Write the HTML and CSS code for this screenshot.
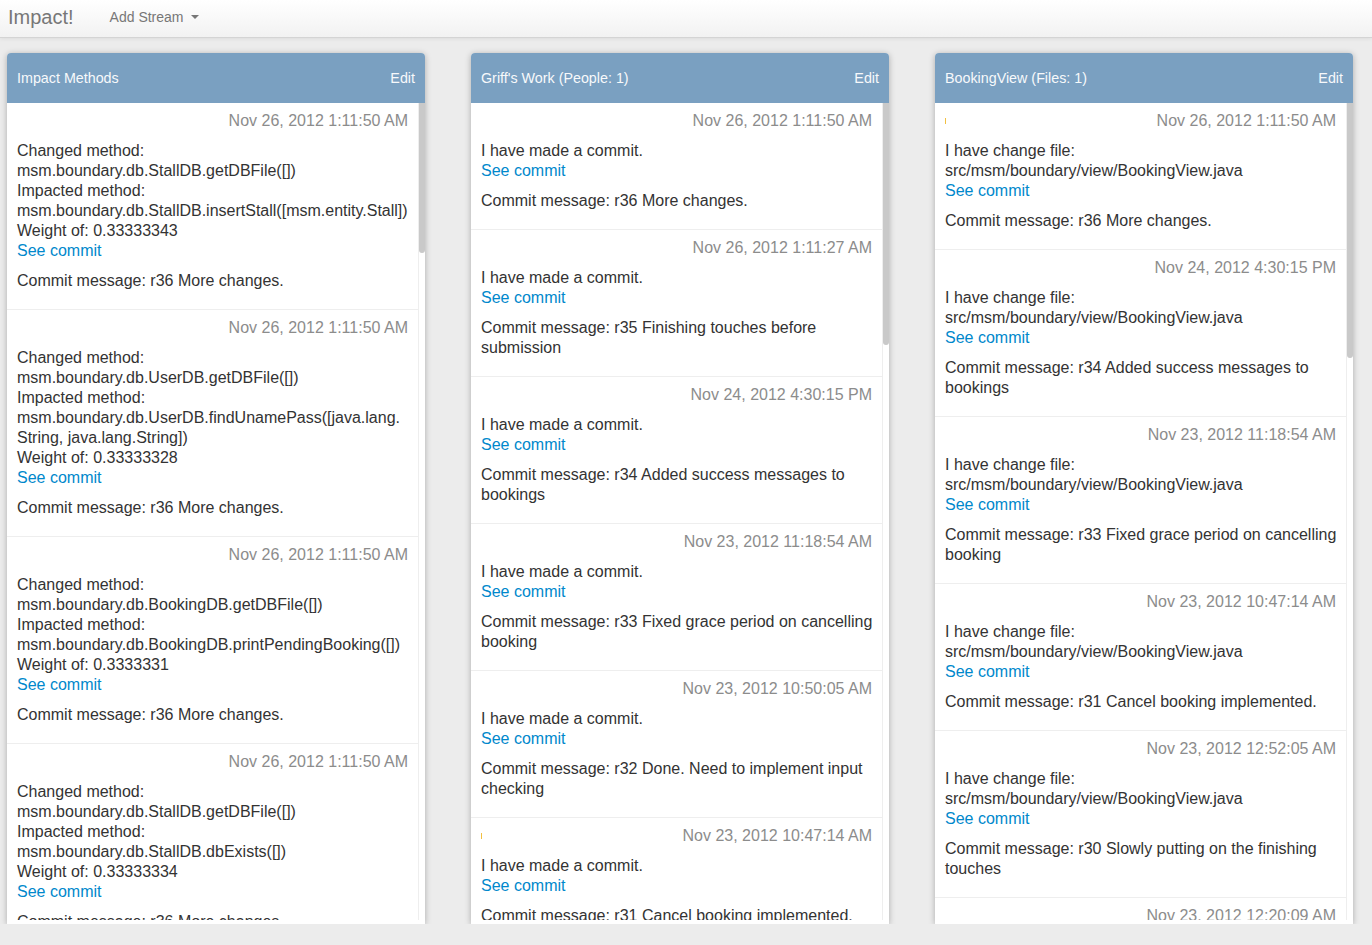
FILE: index.html
```html
<!DOCTYPE html>
<html>
<head>
<meta charset="utf-8">
<title>Impact!</title>
<link rel="stylesheet" href="styles.css">
</head>
<body>
<div class="navbar">
  <span class="brand">Impact!</span>
  <span class="nav-link">Add Stream <span class="caret"></span></span>
</div>
<div class="streams">
  <div class="panel">
    <div class="panel-head"><span>Impact Methods</span><span>Edit</span></div>
    <div class="panel-main">
    <div class="panel-body">
      <div class="item"><div class="date">Nov 26, 2012 1:11:50 AM</div><p class="body">Changed method:<br>msm.boundary.db.StallDB.getDBFile([])<br>Impacted method:<br>msm.boundary.db.StallDB.insertStall([msm.entity.Stall])<br>Weight of: 0.33333343<br><a href="#">See commit</a></p><p class="msg">Commit message: r36 More changes.</p></div>
      <div class="item"><div class="date">Nov 26, 2012 1:11:50 AM</div><p class="body">Changed method:<br>msm.boundary.db.UserDB.getDBFile([])<br>Impacted method:<br>msm.boundary.db.UserDB.findUnamePass([java.lang.String, java.lang.String])<br>Weight of: 0.33333328<br><a href="#">See commit</a></p><p class="msg">Commit message: r36 More changes.</p></div>
      <div class="item"><div class="date">Nov 26, 2012 1:11:50 AM</div><p class="body">Changed method:<br>msm.boundary.db.BookingDB.getDBFile([])<br>Impacted method:<br>msm.boundary.db.BookingDB.printPendingBooking([])<br>Weight of: 0.3333331<br><a href="#">See commit</a></p><p class="msg">Commit message: r36 More changes.</p></div>
      <div class="item"><div class="date">Nov 26, 2012 1:11:50 AM</div><p class="body">Changed method:<br>msm.boundary.db.StallDB.getDBFile([])<br>Impacted method:<br>msm.boundary.db.StallDB.dbExists([])<br>Weight of: 0.33333334<br><a href="#">See commit</a></p><p class="msg">Commit message: r36 More changes.</p></div>
    </div>
    <div class="scrollbar"><div class="thumb" style="height: 150px"></div></div>
    </div>
  </div>

  <div class="panel">
    <div class="panel-head"><span>Griff's Work (People: 1)</span><span>Edit</span></div>
    <div class="panel-main">
    <div class="panel-body">
      <div class="item"><div class="date">Nov 26, 2012 1:11:50 AM</div><p class="body">I have made a commit.<br><a href="#">See commit</a></p><p class="msg">Commit message: r36 More changes.</p></div>
      <div class="item"><div class="date">Nov 26, 2012 1:11:27 AM</div><p class="body">I have made a commit.<br><a href="#">See commit</a></p><p class="msg">Commit message: r35 Finishing touches before submission</p></div>
      <div class="item"><div class="date">Nov 24, 2012 4:30:15 PM</div><p class="body">I have made a commit.<br><a href="#">See commit</a></p><p class="msg">Commit message: r34 Added success messages to bookings</p></div>
      <div class="item"><div class="date">Nov 23, 2012 11:18:54 AM</div><p class="body">I have made a commit.<br><a href="#">See commit</a></p><p class="msg">Commit message: r33 Fixed grace period on cancelling booking</p></div>
      <div class="item"><div class="date">Nov 23, 2012 10:50:05 AM</div><p class="body">I have made a commit.<br><a href="#">See commit</a></p><p class="msg">Commit message: r32 Done. Need to implement input checking</p></div>
      <div class="item"><div class="date"><span class="mark"></span>Nov 23, 2012 10:47:14 AM</div><p class="body">I have made a commit.<br><a href="#">See commit</a></p><p class="msg">Commit message: r31 Cancel booking implemented.</p></div>
    </div>
    <div class="scrollbar"><div class="thumb" style="height: 242px"></div></div>
    </div>
  </div>

  <div class="panel">
    <div class="panel-head"><span>BookingView (Files: 1)</span><span>Edit</span></div>
    <div class="panel-main">
    <div class="panel-body">
      <div class="item"><div class="date"><span class="mark"></span>Nov 26, 2012 1:11:50 AM</div><p class="body">I have change file:<br>src/msm/boundary/view/BookingView.java<br><a href="#">See commit</a></p><p class="msg">Commit message: r36 More changes.</p></div>
      <div class="item"><div class="date">Nov 24, 2012 4:30:15 PM</div><p class="body">I have change file:<br>src/msm/boundary/view/BookingView.java<br><a href="#">See commit</a></p><p class="msg">Commit message: r34 Added success messages to bookings</p></div>
      <div class="item"><div class="date">Nov 23, 2012 11:18:54 AM</div><p class="body">I have change file:<br>src/msm/boundary/view/BookingView.java<br><a href="#">See commit</a></p><p class="msg">Commit message: r33 Fixed grace period on cancelling booking</p></div>
      <div class="item"><div class="date">Nov 23, 2012 10:47:14 AM</div><p class="body">I have change file:<br>src/msm/boundary/view/BookingView.java<br><a href="#">See commit</a></p><p class="msg">Commit message: r31 Cancel booking implemented.</p></div>
      <div class="item"><div class="date">Nov 23, 2012 12:52:05 AM</div><p class="body">I have change file:<br>src/msm/boundary/view/BookingView.java<br><a href="#">See commit</a></p><p class="msg">Commit message: r30 Slowly putting on the finishing touches</p></div>
      <div class="item"><div class="date">Nov 23, 2012 12:20:09 AM</div></div>
    </div>
    <div class="scrollbar"><div class="thumb" style="height: 255px"></div></div>
    </div>
  </div>
</div>
</body>
</html>
```

FILE: styles.css
```css
html, body {
  margin: 0;
  padding: 0;
}
body {
  background: #ececec;
  font-family: "Liberation Sans", Arial, sans-serif;
  color: #333;
  overflow: hidden;
}
.navbar {
  height: 37px;
  display: flex;
  align-items: center;
  padding: 0 8px;
  background: linear-gradient(#ffffff, #f2f2f2);
  border-bottom: 1px solid #d4d4d4;
  box-shadow: 0 1px 4px rgba(0,0,0,0.065);
}
.brand {
  font-size: 20px;
  color: #777;
  margin-top: -2px;
}
.nav-link {
  margin-left: 36px;
  margin-top: -4px;
  font-size: 14px;
  color: #777;
  display: flex;
  align-items: center;
}
.caret {
  display: inline-block;
  width: 0;
  height: 0;
  margin-left: 7px;
  border-top: 4px solid #777;
  border-left: 4px solid transparent;
  border-right: 4px solid transparent;
}
.streams {
  display: flex;
  gap: 46px;
  padding: 15px 19px 0 7px;
}
.panel {
  width: 418px;
  height: 871px;
  background: #fff;
  border-radius: 4px 4px 0 0;
  box-shadow: 0 1px 6px rgba(0,0,0,0.28);
  display: flex;
  flex-direction: column;
  box-sizing: border-box;
  padding-bottom: 4px;
}
.panel-head {
  height: 50px;
  flex: none;
  background: #7aa0c1;
  border-radius: 4px 4px 0 0;
  color: #f7f9fb;
  font-size: 14.3px;
  display: flex;
  justify-content: space-between;
  align-items: center;
  padding: 0 10px;
}
.panel-main {
  flex: 1;
  min-height: 0;
  display: flex;
}
.panel-body {
  flex: 1;
  min-width: 0;
  overflow: hidden;
}
.scrollbar {
  width: 6px;
  flex: none;
  border-left: 1px solid #eee;
  background: #fff;
}
.thumb {
  width: 6px;
  background: #c9c9c9;
  border-radius: 0 0 3px 3px;
}
.item {
  padding: 8px 8px 8px 10px;
  border-bottom: 1px solid #eee;
  font-size: 16px;
  line-height: 20px;
  overflow-wrap: break-word;
}
.date {
  text-align: right;
  color: #8c8c8c;
  padding-right: 2px;
}
.mark {
  float: left;
  width: 1px;
  height: 6px;
  margin-top: 7px;
  background: #f2c042;
}
.body {
  margin: 10px 0 0;
}
.msg {
  margin: 10px 0 10px;
}
a {
  color: #0088cc;
  text-decoration: none;
}
```
